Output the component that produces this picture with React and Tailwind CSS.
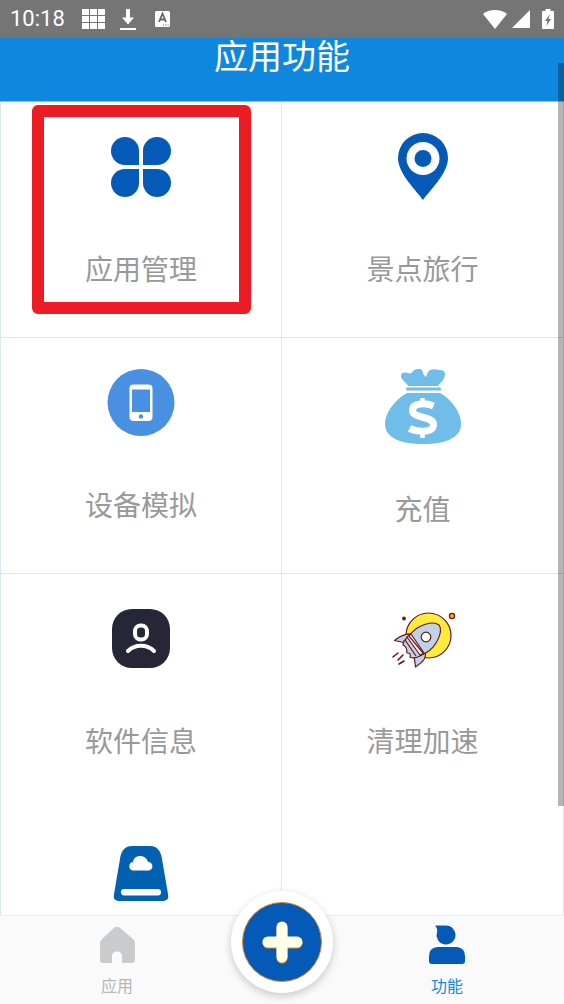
import React from "react";

const AppsIcon = () => (
  <svg width="68" height="72" viewBox="0 0 68 72" fill="#065ab7">
    <path d="M32 32H18a14 14 0 1 1 14-14z" />
    <path d="M36 32V18a14 14 0 1 1 14 14z" />
    <path d="M32 36v14a14 14 0 1 1-14-14z" />
    <path d="M36 36h14a14 14 0 1 1-14 14z" />
  </svg>
);

const PinIcon = () => (
  <svg width="68" height="72" viewBox="0 0 68 72">
    <path d="M34 67C28 58 9 41 9 25a25 25 0 0 1 50 0C59 41 40 58 34 67z" fill="#065ab7" />
    <circle cx="34" cy="25.500" r="16.500" fill="#fff" />
    <circle cx="34" cy="25.500" r="8.500" fill="#065ab7" />
  </svg>
);

const PhoneIcon = () => (
  <svg width="68" height="72" viewBox="0 0 68 72">
    <circle cx="34" cy="33.500" r="33.500" fill="#4a90e2" />
    <rect x="22.500" y="15.500" width="23" height="36.500" rx="4" fill="#fff" />
    <rect x="25" y="20.500" width="18" height="22.500" fill="#4a90e2" />
    <circle cx="34" cy="47.500" r="2.200" fill="#4a90e2" />
  </svg>
);

const MoneyIcon = () => (
  <svg width="76" height="76" viewBox="0 0 76 76" fill="#70bdea">
    <path d="M23 17C21 13 16 11 16 7c0-4 4-4 7-3 2 1 4 0 5-2 3-2 7-3 9-1 1 2 1 5 4 7 1-2 1-5 4-7 3-1 6-1 8 0 3 0 7 0 7 4 0 5-4 8-7 12z" />
    <rect x="21" y="18.500" width="35" height="3" rx="1" />
    <path d="M22 24h33C66 30 76 43 76 55c0 15-18 20-38 20S0 70 0 55C0 43 11 30 22 24z" />
    <g fill="none" stroke="#fff">
      <path d="M37.500 29v8M37.500 60v9" strokeWidth="4.500" />
      <path d="M48.500 37c-7-3-21-4-21 4.500 0 8.500 21 5 21 14 0 8.500-16 8-24 4" strokeWidth="7" />
    </g>
  </svg>
);

const InfoIcon = () => (
  <svg width="68" height="72" viewBox="0 0 68 72">
    <rect x="5" y="4" width="58" height="59" rx="20" fill="#272636" />
    <rect x="28" y="20.500" width="12" height="14" rx="5.500" fill="none" stroke="#fff" strokeWidth="4" />
    <path d="M21 46c7-7 19-7 26 0" fill="none" stroke="#fff" strokeWidth="4" strokeLinecap="round" />
  </svg>
);

const RocketIcon = () => (
  <svg width="68" height="72" viewBox="0 0 68 72" stroke="#6b1515" strokeWidth="1.200" strokeLinejoin="round">
    <circle cx="39.500" cy="30.500" r="22.500" fill="#ffeb3b" />
    <circle cx="63" cy="11" r="2.600" fill="#ffb300" />
    <circle cx="15" cy="13.500" r="1.300" fill="#6b1515" />
    <path d="M23 29c-7-1-12 2-17.500 6.500L17 38z" fill="#bfd2e8" />
    <path d="M36 46c2 7-2 11-9.500 16L25 50z" fill="#bfd2e8" />
    <path d="M15 36c3-3 8-10 15-14 8-4 16-5 20-2 3 4 1 12-3 18-4 7-10 10-16 13-4 2-7 3-10 1 1-3 0-4-3-4 0-4-1-7-4-8z" fill="#bfd2e8" />
    <path d="M18 32l13 18 4-2-13-19z" fill="#fff" />
    <path d="M16 35l11 16M20 31l14 17" fill="none" />
    <circle cx="37" cy="32" r="4.800" fill="#fff" />
    <path d="M9 48l-5 4M14 50l-5 5M15 56l-5 3" fill="none" strokeWidth="1.600" strokeLinecap="round" />
  </svg>
);

const DiskIcon = () => (
  <svg width="68" height="72" viewBox="0 0 68 72">
    <path d="M25 5h18c8 0 11 6 12 13l6 35c1 5-1 7-6 7H13c-5 0-7-2-6-7l6-35C14 11 17 5 25 5z" fill="#0261b1" />
    <path d="M26 29.500a4.300 4.300 0 0 1 0-8.500c1-8 13-8 15 0a4.300 4.300 0 0 1 1 8.500z" fill="#fff" />
    <rect x="14" y="48" width="40" height="6.500" rx="3.200" fill="#fff" />
  </svg>
);

const items = [
  { label: "应用管理", Icon: AppsIcon, marked: true },
  { label: "景点旅行", Icon: PinIcon },
  { label: "设备模拟", Icon: PhoneIcon },
  { label: "充值", Icon: MoneyIcon },
  { label: "软件信息", Icon: InfoIcon, last: true },
  { label: "清理加速", Icon: RocketIcon, last: true },
  { label: "", Icon: DiskIcon, last: true },
  { label: "", Icon: null, last: true },
];

const StatusBar = () => (
  <div className="h-[38px] shrink-0 bg-[#757575] text-white flex items-center justify-between px-2.5">
    <div className="flex items-center">
      <span className="w-[72px] font-[Roboto,sans-serif] text-[22px] leading-6">10:18</span>
      <svg width="23" height="20" viewBox="0 0 23 20" fill="currentColor">
        <path d="M0 0h7v6H0zM8 0h7v6H8zM16 0h7v6h-7zM0 7h7v6H0zM8 7h7v6H8zM16 7h7v6h-7zM0 14h7v6H0zM8 14h7v6H8zM16 14h7v6h-7z" />
      </svg>
      <svg className="ml-[15px]" width="16" height="21" viewBox="0 0 16 21" fill="currentColor">
        <path d="M6 0h4v8.500H14l-6 7-6-7h4zM0 19h16v2H0z" />
      </svg>
      <svg className="ml-[19px]" width="15" height="16" viewBox="0 0 15 16">
        <rect width="15" height="16" rx="1.500" fill="#fff" />
        <path d="M4 11l3.500-8.500L11 11M5.200 8.500h4.600" fill="none" stroke="#666" strokeWidth="1.800" />
        <path d="M8 14h1M10.300 14h1M12.600 14h1" stroke="#666" />
      </svg>
    </div>
    <div className="flex items-center">
      <svg width="24" height="19" viewBox="0 0 24 19" fill="currentColor">
        <path d="M0 4C6-1.300 18-1.300 24 4L12 19z" />
      </svg>
      <svg className="ml-[5px]" width="18" height="18" viewBox="0 0 18 18" fill="currentColor">
        <path d="M18 0v18H0z" />
      </svg>
      <svg className="ml-3" width="12" height="20" viewBox="0 0 12 20">
        <path d="M3.500 0h5v2H12v18H0V2h3.500z" fill="#fff" />
        <path d="M8 5L3 12h2.500L4.500 17 9 10H6.500z" fill="#757575" />
      </svg>
    </div>
  </div>
);

const FeatureCell = ({ label, Icon, marked, last }) => (
  <button
    type="button"
    className={`relative h-[236px] flex flex-col items-center pt-[31px] border-r odd:border-l border-[#dce8f0] ${last ? "" : "border-b"}`}
  >
    {Icon && <Icon />}
    {label && <span className="mt-[43px] text-[28px] leading-10 text-[#999999]">{label}</span>}
    {marked && (
      <span className="absolute top-[3px] bottom-[23px] left-[31px] right-[30px] rounded-md border-12 border-[#ed1c24]" />
    )}
  </button>
);

const BottomNav = () => (
  <nav className="relative h-[89px] shrink-0 flex bg-[#fafafa] border-t border-[#eeeeee]">
    <a href="#apps" className="flex-1 flex flex-col items-center pt-2 text-[#b5b6b8]">
      <svg width="40" height="40" viewBox="0 0 40 40" fill="#cacbcd">
        <path d="M17 4q3-2.500 6 0l13 11q2 2 2 4v17q0 3-3 3H25v-7c0-6-10-6-10 0v7H6q-3 0-3-3V19q0-2 2-4z" />
      </svg>
      <span className="mt-[9px] text-base leading-6">应用</span>
    </a>
    <div className="w-24 flex justify-center">
      <button
        type="button"
        aria-label="添加"
        className="absolute -top-[25px] size-[102px] rounded-full bg-white flex items-center justify-center shadow-[0_3px_8px_rgba(0,0,0,0.2)]"
      >
        <svg width="80" height="80" viewBox="0 0 80 80">
          <circle cx="40" cy="40" r="39.500" fill="#065ab7" stroke="#d9822b" />
          <path d="M40 26v30M26 41h29" stroke="#f08a24" strokeWidth="11" strokeLinecap="round" />
          <path d="M40 25v30M26 40h29" stroke="#ffffe8" strokeWidth="11" strokeLinecap="round" />
        </svg>
      </button>
    </div>
    <a href="#features" className="flex-1 flex flex-col items-center pt-2 text-[#1488e0]">
      <svg width="40" height="40" viewBox="0 0 40 40" fill="#065ab7">
        <path d="M8 1.500h11a9.500 9.500 0 1 1-9 6.500Q11 5 8 1.500z" />
        <path d="M10 23h20q8 1 8 9v5q0 3-3 3H5q-3 0-3-3v-5q0-8 8-9z" />
      </svg>
      <span className="mt-[9px] text-base leading-6">功能</span>
    </a>
  </nav>
);

const App = () => {
  return (
    <div className="h-screen flex flex-col overflow-hidden bg-white font-['Noto_Sans_CJK_SC',sans-serif]">
      <StatusBar />
      <main className="relative flex-1 min-h-0 flex flex-col">
        <header className="h-16 shrink-0 bg-[#0f87de] border-b border-[#8cc6f0] text-white text-center">
          <h1 className="text-[34px] leading-[34px]">应用功能</h1>
        </header>
        <div className="flex-1 min-h-0 overflow-hidden">
          <div className="grid grid-cols-2">
            {items.map((item, i) => (
              <FeatureCell key={i} {...item} />
            ))}
          </div>
        </div>
        {/* scroll thumb */}
        <div className="absolute right-0 top-[25px] h-[743px] w-1.5 bg-black/29" />
      </main>
      <BottomNav />
    </div>
  );
};

export default App;
